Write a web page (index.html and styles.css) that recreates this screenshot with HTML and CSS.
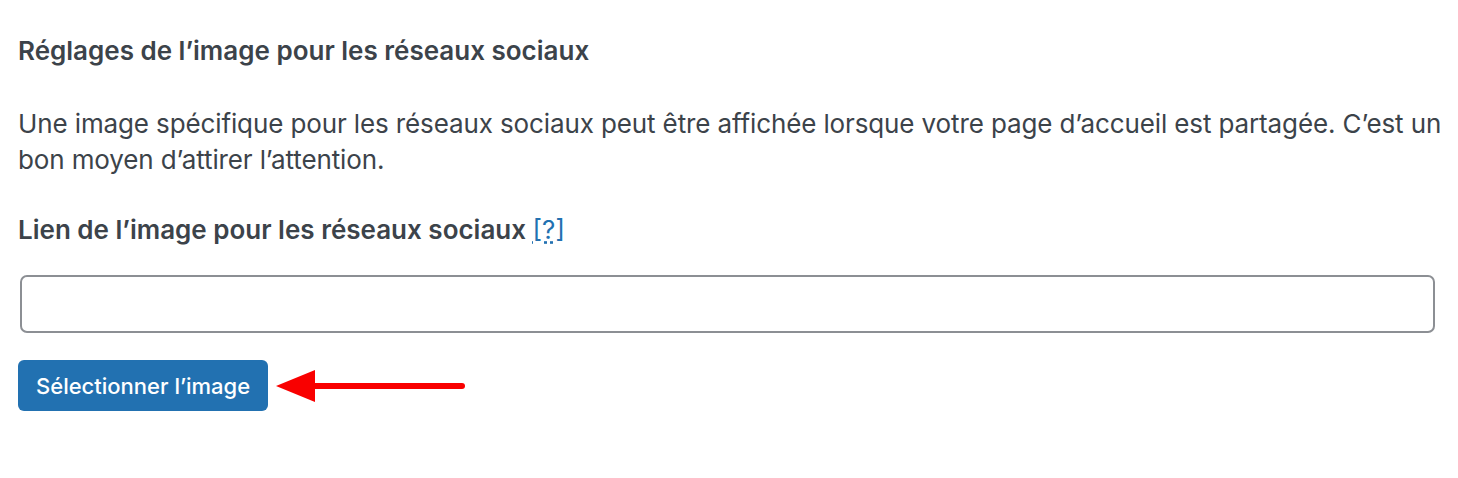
FILE: index.html
```html
<!doctype html>
<html lang="fr">
  <head>
    <meta charset="UTF-8" />
    <meta name="viewport" content="width=device-width, initial-scale=1.0" />
    <title>Réglages de l’image pour les réseaux sociaux</title>
    <link rel="stylesheet" href="styles.css">
  </head>
  <body>
    <div class="settings-panel">
      <h2 class="panel-title">Réglages de l’image pour les réseaux sociaux</h2>

      <p class="panel-desc">
        Une image spécifique pour les réseaux sociaux peut être affichée lorsque votre page d’accueil est partagée. C’est un bon moyen d’attirer l’attention.
      </p>

      <label class="field-label" for="social-image">
        Lien de l’image pour les réseaux sociaux <a href="#" class="help-link">[?]</a>
      </label>

      <input type="text" id="social-image" class="text-input" />

      <div class="button-row">
        <button class="select-button">Sélectionner l’image</button>
        <!-- annotation arrow -->
        <svg class="pointer-arrow" width="192" height="36" viewBox="0 0 192 36">
          <path d="M0 18 L39 2 L39 34 Z" fill="#f90000" />
          <line x1="36" y1="18" x2="186" y2="18" stroke="#f90000" stroke-width="6" stroke-linecap="round" />
        </svg>
      </div>
    </div>
  </body>
</html>
```

FILE: styles.css
```css
/* social image settings */
:root {
  --wp-text: #3c434a;
  --wp-blue: #2271b1;
  --wp-border: #8c8f94;
}

body {
  margin: 0;
  padding: 0;
  background: #fff;
  color: var(--wp-text);
  font-family: Inter, 'Liberation Sans', Arial, sans-serif;
}

.settings-panel {
  padding: 33px 0 0 18px;
  width: 1440px;
}

.panel-title {
  margin: 0;
  font-size: 26px;
  line-height: 36px;
  font-weight: 600;
}

.panel-desc {
  margin: 37px 0 0;
  font-size: 26px;
  line-height: 36px;
  letter-spacing: -0.12px;
}

.field-label {
  display: block;
  margin-top: 34px;
  font-size: 26px;
  line-height: 36px;
  font-weight: 600;
}

.help-link {
  color: var(--wp-blue);
  font-weight: 400;
  text-decoration: underline dotted;
}

.text-input {
  display: block;
  box-sizing: border-box;
  margin: 27px 0 0 2px;
  width: 1415px;
  height: 58px;
  border: 2px solid var(--wp-border);
  border-radius: 7px;
  background: #fff;
}

.button-row {
  display: flex;
  align-items: center;
  margin-top: 27px;
}

.select-button {
  height: 51px;
  padding: 0 18px;
  background: var(--wp-blue);
  color: #fff;
  border: none;
  border-radius: 6px;
  font-family: inherit;
  font-size: 22px;
  font-weight: 500;
}

.pointer-arrow {
  margin-left: 8px;
}
```
